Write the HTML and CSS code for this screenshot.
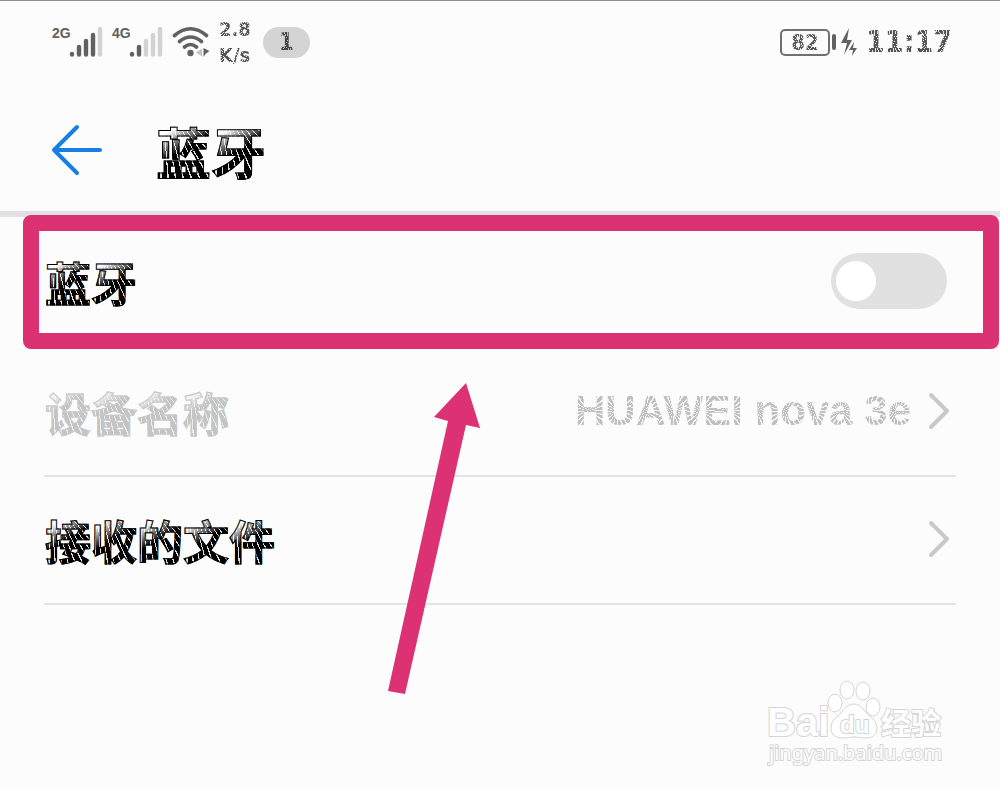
FILE: index.html
```html
<!DOCTYPE html>
<html lang="zh-CN">
<head>
  <meta charset="UTF-8">
  <meta name="viewport" content="width=device-width, initial-scale=1.0">
  <title>蓝牙</title>
  <link rel="stylesheet" href="styles.css">
</head>
<body>

<div class="status-bar">
  <div class="status-left">
    <div class="signal">
      <span class="network">2G</span>
      <svg width="34" height="32" viewBox="0 0 34 32" stroke-width="4.4" stroke-linecap="round">
        <path stroke="#616161" d="M3 28v0.6M10 21v7.6M17 15v13.6M24 9v19.6"/>
        <path stroke="#d2d2d2" d="M31 3v25.6"/>
      </svg>
    </div>
    <div class="signal">
      <span class="network">4G</span>
      <svg width="34" height="32" viewBox="0 0 34 32" stroke-width="4.4" stroke-linecap="round">
        <path stroke="#616161" d="M3 28v0.6M10 21v7.6"/>
        <path stroke="#d2d2d2" d="M17 15v13.6M24 9v19.6M31 3v25.6"/>
      </svg>
    </div>
    <svg class="wifi" width="38" height="32" viewBox="0 0 38 32">
      <path fill="none" stroke="#616161" stroke-width="3.6" stroke-linecap="round" d="M2.500 9.500Q18.500 -4 34.500 9.500M7.500 15.500Q18.500 6.500 29.500 15.500M12.500 21Q18.500 16 24.500 21"/>
      <circle cx="18.500" cy="27" r="3.200" fill="#616161"/>
      <path fill="#c4c4c4" d="M24 26.500l6-4v8z"/>
      <path fill="#616161" d="M31.500 22v9l2-3 4-3z"/>
    </svg>
    <div class="speed"><span class="rays">2.8</span><span class="rays">K/s</span></div>
    <div class="badge"><span class="rays">1</span></div>
  </div>
  <div class="status-right">
    <div class="battery"><span class="rays">82</span></div>
    <svg class="charging" width="26" height="30" viewBox="0 0 26 30" fill="#616161">
      <rect x="0" y="7" width="4" height="16" rx="2"/>
      <path d="M17 1L9 16h6l-3 12 8-15h-5z"/>
      <path d="M22 15l-5 8h4l-1 6 5-8h-4z"/>
    </svg>
    <span class="clock rays">11:17</span>
  </div>
</div>

<header class="title-bar">
  <button class="back" type="button" aria-label="返回">
    <svg width="52" height="52" viewBox="0 0 52 52" fill="none" stroke="#1680e0" stroke-width="4" stroke-linecap="round" stroke-linejoin="round">
      <path d="M27 3L4 26l23 23M4 26h46"/>
    </svg>
  </button>
  <h1 class="hatched">蓝牙</h1>
</header>

<main>
  <div class="highlight">
    <label class="hatched" for="bluetooth">蓝牙</label>
    <input class="toggle" type="checkbox" id="bluetooth">
  </div>

  <div class="list">
    <button class="row row-disabled" type="button">
      <span class="hatched">设备名称</span>
      <span class="value rays">HUAWEI nova 3e</span>
      <svg class="chevron" width="22" height="38" viewBox="0 0 22 38"><path d="M3 3l16 16L3 35"/></svg>
    </button>
    <button class="row" type="button">
      <span class="hatched">接收的文件</span>
      <svg class="chevron" width="22" height="38" viewBox="0 0 22 38"><path d="M3 3l16 16L3 35"/></svg>
    </button>
  </div>

  <svg class="pointer" width="94" height="312" viewBox="0 0 94 312">
    <path fill="#dc3273" d="M78 0l14 45-14-3L17 311 0 308 60 38l-14-4z"/>
  </svg>
</main>

<!-- watermark -->
<svg class="watermark" width="184" height="90" viewBox="0 0 184 90">
  <text class="mark-bold" x="1" y="56" font-size="40">Bai</text>
  <g fill="#fff" stroke="#d4d4d4">
    <ellipse cx="69" cy="23" rx="7" ry="9"/>
    <ellipse cx="81" cy="10" rx="7" ry="9"/>
    <ellipse cx="97" cy="11" rx="7" ry="9"/>
    <ellipse cx="107" cy="27" rx="7" ry="9"/>
    <path d="M88 24c-8 0-11 8-16 12-5 4-7 7-7 12 0 7 5 10 11 10 5 0 8-1 12-1s7 1 12 1c6 0 11-3 11-10 0-5-3-8-7-12-6-4-8-12-16-12z"/>
  </g>
  <text class="mark-bold" x="74" y="53" font-size="24">du</text>
  <text class="mark-cjk" x="115" y="54" font-size="30">经验</text>
  <text class="mark-url" x="3" y="80" font-size="20">jingyan.baidu.com</text>
</svg>

</body>
</html>
```
FILE: styles.css
```css
* { box-sizing: border-box; }

body {
  position: relative;
  margin: 0;
  min-height: 100vh;
  background: #fcfcfc;
  border-top: 1px solid #8f8f8f;
  font-family: "Liberation Sans", "Noto Sans CJK SC", sans-serif;
  color: #000;
}

svg {
  display: block;
  flex: none;
}

button {
  border: 0;
  padding: 0;
  background: none;
  font: inherit;
  color: inherit;
}

/* sunburst filled latin text */
.rays {
  color: transparent;
  background: repeating-conic-gradient(#555 0 13deg, #e4e4e4 13deg 18deg) 0 0 / 18px 100%;
  -webkit-background-clip: text;
  background-clip: text;
}

/* outlined chinese text, light at the top and dark at the bottom */
.hatched {
  font-family: "Noto Sans CJK SC", sans-serif;
  font-size: 46px;
  line-height: 60px;
  font-weight: bold;
  color: transparent;
  -webkit-text-stroke: 1px #000;
  background:
    linear-gradient(150deg, #fff 24%, transparent 50%) 0 0 / 1em 100%,
    repeating-conic-gradient(from 90deg at 10% -30%, #ddd 0 1deg, #000 1deg 5deg) 0 0 / 1em 100%;
  -webkit-background-clip: text;
  background-clip: text;
}

.status-bar {
  display: flex;
  justify-content: space-between;
  align-items: center;
  height: 82px;
  padding: 0 48px 0 52px;
  font-family: "DejaVu Sans Condensed", "DejaVu Sans", sans-serif;
  font-weight: bold;
  color: #616161;
}

.status-left, .status-right {
  display: flex;
  align-items: center;
}

.status-left { gap: 9px; }

.signal { display: flex; }

.network {
  width: 17px;
  font: bold 14px/14px "Liberation Sans Narrow", "Liberation Sans", sans-serif;
}

.speed {
  display: flex;
  flex-direction: column;
  font-size: 20px;
  line-height: 26px;
}

.badge {
  width: 47px;
  margin-left: 3px;
  border-radius: 16px;
  background: #d4d4d4;
  text-align: center;
  font-size: 24px;
  line-height: 31px;
}

.badge .rays {
  background-image: repeating-conic-gradient(#444 0 13deg, #bbb 13deg 18deg);
}

.battery {
  width: 50px;
  border: 2px solid #707070;
  border-radius: 5px;
  text-align: center;
  font-size: 22px;
  line-height: 23px;
}

.charging { margin-left: 2px; }

.clock {
  margin-left: 8px;
  font-size: 30px;
  line-height: 42px;
}

.title-bar {
  display: flex;
  align-items: center;
  gap: 54px;
  height: 134px;
  padding: 6px 50px 0;
  border-bottom: 6px solid #e1e1e1;
}

.title-bar h1 {
  margin: 0;
  font-size: 55px;
  line-height: 70px;
}

main { position: relative; }

.highlight {
  position: relative;
  display: flex;
  justify-content: space-between;
  align-items: center;
  margin: -2px 1px 0 23px;
  padding: 20px 36px 22px 6px;
  border: 16px solid #dc3273;
  border-radius: 8px;
  background: #fcfcfc;
}

.toggle {
  appearance: none;
  width: 116px;
  height: 56px;
  margin: 0;
  padding: 8px 5px;
  border-radius: 28px;
  background: #e1e1e1;
}

.toggle::before {
  content: "";
  display: block;
  width: 40px;
  height: 40px;
  border-radius: 50%;
  background: #fff;
}

.toggle:checked { background: #1680e0; }
.toggle:checked::before { margin-left: auto; }

.list { padding: 0 44px; }

.row {
  display: flex;
  align-items: center;
  width: 100%;
  height: 128px;
  padding: 0 6px 2px 1px;
  border-bottom: 2px solid #e4e4e4;
  text-align: left;
}

.row-disabled .hatched {
  -webkit-text-stroke-color: #c8c8c8;
  background-image:
    linear-gradient(150deg, #fff 18%, transparent 42%),
    repeating-conic-gradient(from 90deg at 10% -30%, #eee 0 1deg, #c4c4c4 1deg 5deg);
}

.value {
  margin-left: auto;
  font-size: 42px;
  line-height: 50px;
  font-weight: bold;
  background-image: repeating-conic-gradient(#c0c0c0 0 12deg, #f4f4f4 12deg 18deg);
  background-size: 28px 100%;
}

.chevron {
  margin-left: auto;
  fill: none;
  stroke: #c8c8c8;
  stroke-width: 4;
  stroke-linecap: round;
  stroke-linejoin: round;
}

.value + .chevron { margin-left: 17px; }

.pointer {
  position: absolute;
  top: 168px;
  left: 388px;
}

.watermark {
  position: absolute;
  right: 50px;
  bottom: 17px;
}

.watermark text {
  fill: #fff;
  stroke: #d4d4d4;
  stroke-width: 2px;
  paint-order: stroke;
}

.mark-bold {
  font-family: "Liberation Sans", sans-serif;
  font-weight: bold;
}

.mark-cjk {
  font-family: "Noto Sans CJK SC", sans-serif;
  font-weight: bold;
}

.mark-url { font-family: "Noto Sans", sans-serif; }
```
